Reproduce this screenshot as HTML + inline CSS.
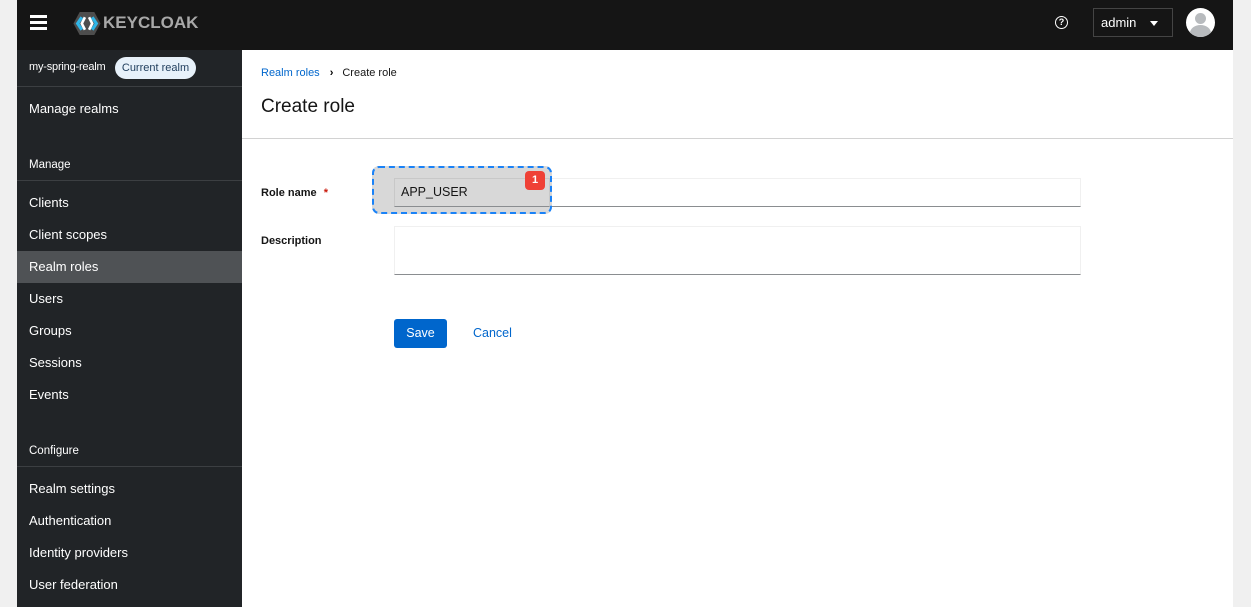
<!DOCTYPE html>
<html><head><meta charset="utf-8"><style>
*{box-sizing:border-box;margin:0;padding:0}
body{width:1251px;height:607px;background:#f0f0f0;font-family:"Liberation Sans",sans-serif;position:relative;overflow:hidden}
#app{position:absolute;left:17px;top:0;width:1216px;height:607px;background:#fff}
#hdr{position:absolute;left:0;top:0;width:1216px;height:50px;background:#151515}
#side{position:absolute;left:0;top:50px;width:225px;height:557px;background:#212427;color:#fff;font-size:13px}
.it{position:absolute;left:0;width:225px;height:32px;line-height:32px;padding-left:12px}
.sec{position:absolute;left:12px;font-size:12px;color:#fff}
.line{position:absolute;left:0;width:225px;height:1px;background:#3c3f42}
#main{position:absolute;left:225px;top:50px;width:991px}
</style></head><body>
<div id="app">
<div id="hdr">
 <div style="position:absolute;left:13px;top:15px;width:17px;height:3px;background:#fff;box-shadow:0 6px #fff,0 12px #fff"></div>
 <svg style="position:absolute;left:55px;top:11px" width="30" height="25" viewBox="0 0 28 24"><polygon points="7,1 21,1 27,12 21,23 7,23 1,12" fill="#4d4d4d"/><path d="M9 6 L5 12 L9 18 M19 6 L23 12 L19 18" stroke="#2fb6e8" stroke-width="3" fill="none"/><path d="M12 6 L9 12 L12 18 M16 6 L19 12 L16 18" stroke="#fff" stroke-width="2.5" fill="none"/></svg>
 <div style="position:absolute;left:86px;top:13px;color:#a8a8a8;font-weight:bold;font-size:17px;letter-spacing:0">KEYCLOAK</div>
 <div style="position:absolute;left:1038px;top:16px;width:13px;height:13px;border:1.5px solid #fff;border-radius:50%;color:#fff;font-size:9px;font-weight:bold;text-align:center;line-height:10px">?</div>
 <div style="position:absolute;left:1076px;top:8px;width:80px;height:29px;border:1px solid #444;color:#fff;font-size:13px;line-height:27px;padding-left:7px">admin<span style="position:absolute;right:14px;top:12px;border:4px solid transparent;border-top:5px solid #fff;border-bottom:0"></span></div>
 <div style="position:absolute;left:1169px;top:8px;width:29px;height:29px;border-radius:50%;background:#fff;overflow:hidden"><div style="position:absolute;left:9px;top:5px;width:11px;height:11px;border-radius:50%;background:#b8bbbe"></div><div style="position:absolute;left:4px;top:17px;width:21px;height:16px;border-radius:50%;background:#b8bbbe"></div></div>
</div>
<div id="side">
 <div style="position:absolute;left:12px;top:11px;font-size:11px;letter-spacing:-0.2px">my-spring-realm</div>
 <div style="position:absolute;left:98px;top:7px;height:22px;width:81px;border-radius:11px;background:#e7f1fa;color:#1f3d5c;font-size:11px;line-height:22px;text-align:center">Current realm</div>
 <div class="line" style="top:36px"></div>
 <div class="it" style="top:43px">Manage realms</div>
 <div class="sec" style="top:109px;font-size:11.5px">Manage</div>
 <div class="line" style="top:130px"></div>
 <div class="it" style="top:137px">Clients</div>
 <div class="it" style="top:169px">Client scopes</div>
 <div class="it" style="top:201px;background:#4f5255">Realm roles</div>
 <div class="it" style="top:233px">Users</div>
 <div class="it" style="top:265px">Groups</div>
 <div class="it" style="top:297px">Sessions</div>
 <div class="it" style="top:329px">Events</div>
 <div class="sec" style="top:395px;font-size:11.5px">Configure</div>
 <div class="line" style="top:416px"></div>
 <div class="it" style="top:423px">Realm settings</div>
 <div class="it" style="top:455px">Authentication</div>
 <div class="it" style="top:487px">Identity providers</div>
 <div class="it" style="top:519px">User federation</div>
</div>
<div id="main">
 <div style="position:absolute;left:19px;top:17px;font-size:11px"><span style="color:#06c">Realm roles</span><span style="margin:0 9px 0 10px;font-weight:bold">›</span><span style="color:#151515">Create role</span></div>
 <div style="position:absolute;left:19px;top:46px;font-size:19px;color:#151515">Create role</div>
 <div style="position:absolute;left:0;top:88px;width:991px;height:1px;background:#d2d2d2"></div>
 <div style="position:absolute;left:19px;top:137px;font-size:11px;font-weight:bold;color:#151515">Role name <span style="color:#c9190b;margin-left:4px">*</span></div>
 <div style="position:absolute;left:152px;top:128px;width:687px;height:29px;border:1px solid #f0f0f0;border-bottom:1px solid #8a8d90"></div>
 <div style="position:absolute;left:130px;top:116px;width:180px;height:48px;background:#d8d8d8;border:2px dashed #1a82f7;border-radius:7px"></div>
 <div style="position:absolute;left:152px;top:128px;width:156px;height:29px;border:1px solid #c8c8c8;border-bottom:1px solid #8a8d90;font-size:12.5px;line-height:27px;padding-left:6px;color:#151515">APP_USER</div>
 <div style="position:absolute;left:283px;top:121px;width:20px;height:19px;background:#ef4136;border-radius:4px;color:#fff;font-size:11px;font-weight:bold;text-align:center;line-height:19px">1</div>
 <div style="position:absolute;left:19px;top:185px;font-size:11px;font-weight:bold;color:#151515">Description</div>
 <div style="position:absolute;left:152px;top:176px;width:687px;height:49px;border:1px solid #f0f0f0;border-bottom:1px solid #8a8d90"></div>
 <div style="position:absolute;left:152px;top:269px;width:53px;height:29px;background:#06c;border-radius:3px;color:#fff;font-size:12.5px;text-align:center;line-height:29px">Save</div>
 <div style="position:absolute;left:231px;top:276px;font-size:12.5px;color:#06c">Cancel</div>
</div>
</div>
</body></html>
